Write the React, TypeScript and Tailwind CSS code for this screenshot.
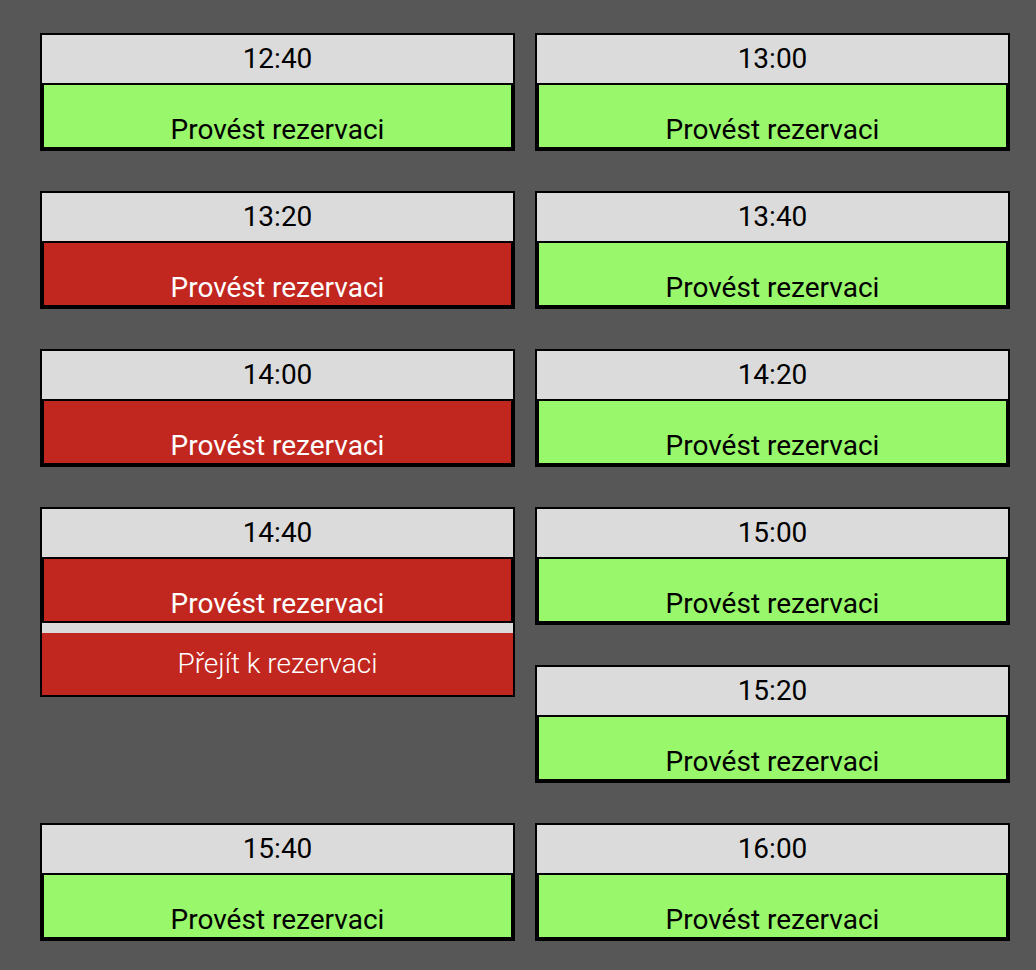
import React from "react"

type Slot = {
  time: string,
  taken?: boolean,
  mine?: boolean
}

function SlotCard({ slot }: { slot: Slot }) {
  return (
    <div className="w-[475px] border-2 border-black bg-[#dbdbdb]">
      <div className="h-[48px] flex items-center justify-center text-[28px] leading-none text-black">
        {slot.time}
      </div>
      <button
        className={
          slot.taken
            ? "w-full h-[66px] border-2 border-black bg-[#c1271f] flex items-end justify-center pb-[3px] text-[28px] leading-none text-white cursor-pointer"
            : "w-full h-[66px] border-2 border-black bg-[#99f76b] flex items-end justify-center pb-[3px] text-[28px] leading-none text-black cursor-pointer"
        }
      >
        Provést rezervaci
      </button>
      {slot.mine && (
        <div className="mt-[10px] h-[62px] bg-[#c1271f] flex items-center justify-center text-[28px] leading-none text-white font-light">
          Přejít k rezervaci
        </div>
      )}
    </div>
  )
}

export default function App() {
  return (
    <div
      className="min-h-screen bg-[#575757] pt-[33px] pl-[40px] flex flex-col gap-[40px]"
      style={{ fontFamily: "Roboto, 'Noto Sans', sans-serif" }}
    >
      <div className="flex gap-[20px]">
        <SlotCard slot={{ time: "12:40" }} />
        <SlotCard slot={{ time: "13:00" }} />
      </div>
      <div className="flex gap-[20px]">
        <SlotCard slot={{ time: "13:20", taken: true }} />
        <SlotCard slot={{ time: "13:40" }} />
      </div>
      <div className="flex gap-[20px]">
        <SlotCard slot={{ time: "14:00", taken: true }} />
        <SlotCard slot={{ time: "14:20" }} />
      </div>
      <div className="flex items-start gap-[20px]">
        <SlotCard slot={{ time: "14:40", taken: true, mine: true }} />
        <div className="flex flex-col gap-[40px]">
          <SlotCard slot={{ time: "15:00" }} />
          <SlotCard slot={{ time: "15:20" }} />
        </div>
      </div>
      <div className="flex gap-[20px]">
        <SlotCard slot={{ time: "15:40" }} />
        <SlotCard slot={{ time: "16:00" }} />
      </div>
    </div>
  )
}
